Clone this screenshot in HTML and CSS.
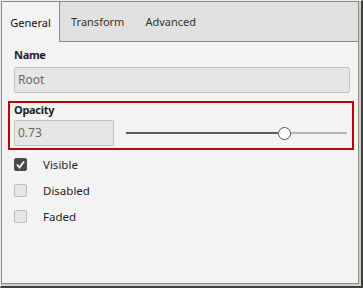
FILE: index.html
```html
<!DOCTYPE html>
<html lang="en">
<head>
    <meta charset="UTF-8">
    <meta name="viewport" content="width=device-width, initial-scale=1.0">
    <title>Properties</title>
    <link rel="stylesheet" href="styles.css">
</head>
<body>
    <div class="window">
        <div class="panel">
            <div class="tabs">
                <div class="tab active">General</div>
                <div class="tab">Transform</div>
                <div class="tab">Advanced</div>
                <div class="tab-fill"></div>
            </div>
            <div class="content">
                <div class="label">Name</div>
                <div class="field name-field">Root</div>

                <div class="group highlight">
                    <div class="label">Opacity</div>
                    <div class="row">
                        <div class="field opacity-field">0.73</div>
                        <div class="slider">
                            <div class="track-done" style="width: calc((100% - 13px) * 0.73);"></div>
                            <div class="thumb"></div>
                            <div class="track-rest"></div>
                        </div>
                    </div>
                </div>

                <div class="checks">
                    <div class="check">
                        <span class="box checked">
                            <svg width="13" height="13" viewBox="0 0 13 13">
                                <polyline points="3,6.5 5.5,9.5 10,3.5" fill="none" stroke="#fff" stroke-width="1.8"/>
                            </svg>
                        </span>
                        <span>Visible</span>
                    </div>
                    <div class="check">
                        <span class="box"></span>
                        <span>Disabled</span>
                    </div>
                    <div class="check">
                        <span class="box"></span>
                        <span>Faded</span>
                    </div>
                </div>
            </div>
        </div>
    </div>
</body>
</html>
```

FILE: styles.css
```css
body {
    margin: 0;
    font-family: "Noto Sans", "Open Sans", sans-serif;
    font-size: 11px;
    color: #1e1e1e;
}
.window {
    width: 363px;
    height: 288px;
    box-sizing: border-box;
    border-left: 1px solid #ececec;
    border-top: 1px solid #ececec;
    border-right: 2px solid #404040;
    border-bottom: 2px solid #404040;
    background: #d4d0c8;
}
.panel {
    width: 358px;
    height: 283px;
    box-sizing: border-box;
    border: 1px solid #8a8a8a;
    background: #f3f3f3;
}
.tabs {
    display: flex;
    height: 40px;
    background: #e1e1e1;
}
.tab {
    display: flex;
    align-items: center;
    padding: 0 10px 0 11px;
    box-sizing: border-box;
    border-bottom: 1px solid #8a8a8a;
    color: #333;
}
.tab.active {
    width: 58px;
    padding: 0;
    justify-content: center;
    background: #f3f3f3;
    border-bottom: none;
    border-right: 1px solid #8a8a8a;
    color: #111;
}
.tab-fill {
    flex: 1;
    border-bottom: 1px solid #8a8a8a;
}
.content {
    padding: 6px 8px 0 12px;
}
.label {
    font-weight: bold;
    line-height: 14px;
    letter-spacing: -0.3px;
}
.field {
    height: 26px;
    box-sizing: border-box;
    border: 1px solid #c2c2c2;
    border-radius: 2px;
    background: #e6e6e6;
    color: #666;
    font-size: 12px;
    line-height: 24px;
    padding-left: 3px;
}
.name-field {
    margin-top: 5px;
}
.highlight {
    margin: 8px -4px 0 -6px;
    padding: 0 2px 2px 4px;
    border: 2px solid #c00000;
}
.highlight .label {
    margin-top: 0;
}
.row {
    display: flex;
    align-items: center;
    margin-top: 3px;
}
.opacity-field {
    width: 100px;
}
.slider {
    flex: 1;
    display: flex;
    align-items: center;
    margin: 0 3px 0 12px;
}
.track-done {
    height: 2px;
    background: #5a5a5a;
}
.track-rest {
    flex: 1;
    height: 2px;
    background: #b4b4b4;
}
.thumb {
    width: 13px;
    height: 13px;
    box-sizing: border-box;
    border: 1.5px solid #555;
    border-radius: 50%;
    background: #fff;
}
.checks {
    display: flex;
    flex-direction: column;
    gap: 13px;
    margin-top: 8px;
}
.check {
    display: flex;
    align-items: center;
    gap: 16px;
    height: 13px;
    font-size: 11.5px;
}
.box {
    width: 13px;
    height: 13px;
    box-sizing: border-box;
    border: 1px solid #bdbdbd;
    border-radius: 2px;
    background: #e6e6e6;
    display: flex;
}
.box.checked {
    border-color: #4a4a4a;
    background: #4a4a4a;
}
.box.checked svg {
    margin: -1px;
}
```
